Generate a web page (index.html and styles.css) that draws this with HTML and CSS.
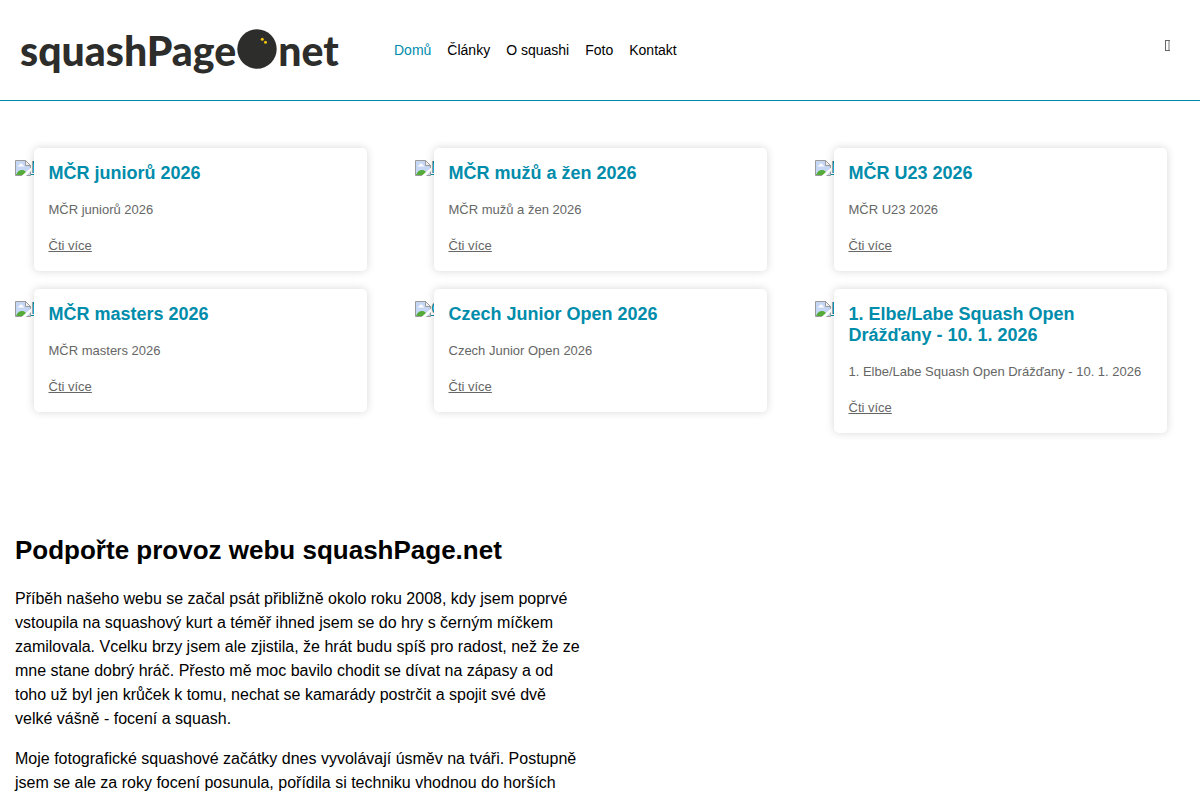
FILE: index.html
```html
<!DOCTYPE html>
<html lang="cs">
<head>
<meta charset="utf-8">
<meta name="viewport" content="width=device-width, initial-scale=1">
<title>squashPage.net</title>
<link rel="stylesheet" href="styles.css">
</head>
<body>
<svg class="sprite" aria-hidden="true">
  <symbol id="missing" viewBox="0 0 16 16">
    <path d="M.5.5h10l5 5v10H.5z" fill="#c6d6f5" stroke="#9b9b9b"/>
    <path d="M3 6.500q0-1.500 1.500-1.500Q5 3 6.500 3.500 8 4 7.500 5 9 5 9 6.500z" fill="#fff"/>
    <path d="M1 15q2-5 6-5t5 5z" fill="#54ab38"/>
    <path d="M10.500.5v5h5z" fill="#f4f4f4" stroke="#9b9b9b"/>
    <path d="M6.500 16 16 7.500V11l-5 5z" fill="#fff"/>
  </symbol>
</svg>
<header class="header">
  <a class="logo" href="#" aria-label="squashPage.net">
    <span>squashPage</span>
    <svg class="ball" viewBox="0 0 40 40" aria-hidden="true">
      <circle cx="20" cy="20" r="19.700" fill="#2d2d2b"/>
      <circle cx="25.300" cy="10.300" r="1.500" fill="#f3c50f"/>
      <circle cx="28.500" cy="13.200" r="1.500" fill="#f3c50f"/>
    </svg>
    <span>net</span>
  </a>
  <nav class="nav">
    <a class="active" href="#">Domů</a>
    <a href="#">Články</a>
    <a href="#">O squashi</a>
    <a href="#">Foto</a>
    <a href="#">Kontakt</a>
  </nav>
  <button class="search" type="button" aria-label="Hledat">
    <svg viewBox="0 0 5 11" aria-hidden="true">
      <path d="M0 0h5v11H0zM1 1v9h2V1z" fill="#666" fill-rule="evenodd"/>
      <path d="M3 1h2v9H3z" fill="#bbb"/>
    </svg>
  </button>
</header>
<main>
  <section class="articles">
    <article class="item">
      <a class="thumb" href="#" aria-label="MČR juniorů 2026"><svg class="missing" aria-hidden="true"><use href="#missing"/></svg>M</a>
      <div class="card"><h3>MČR juniorů 2026</h3><p>MČR juniorů 2026</p><a class="more" href="#">Čti více</a></div>
    </article>
    <article class="item">
      <a class="thumb" href="#" aria-label="MČR mužů a žen 2026"><svg class="missing" aria-hidden="true"><use href="#missing"/></svg>M</a>
      <div class="card"><h3>MČR mužů a žen 2026</h3><p>MČR mužů a žen 2026</p><a class="more" href="#">Čti více</a></div>
    </article>
    <article class="item">
      <a class="thumb" href="#" aria-label="MČR U23 2026"><svg class="missing" aria-hidden="true"><use href="#missing"/></svg>M</a>
      <div class="card"><h3>MČR U23 2026</h3><p>MČR U23 2026</p><a class="more" href="#">Čti více</a></div>
    </article>
    <article class="item">
      <a class="thumb" href="#" aria-label="MČR masters 2026"><svg class="missing" aria-hidden="true"><use href="#missing"/></svg>M</a>
      <div class="card"><h3>MČR masters 2026</h3><p>MČR masters 2026</p><a class="more" href="#">Čti více</a></div>
    </article>
    <article class="item">
      <a class="thumb" href="#" aria-label="Czech Junior Open 2026"><svg class="missing" aria-hidden="true"><use href="#missing"/></svg>C</a>
      <div class="card"><h3>Czech Junior Open 2026</h3><p>Czech Junior Open 2026</p><a class="more" href="#">Čti více</a></div>
    </article>
    <article class="item">
      <a class="thumb" href="#" aria-label="Elbe/Labe Squash Open"><svg class="missing" aria-hidden="true"><use href="#missing"/></svg>E</a>
      <div class="card"><h3>1. Elbe/Labe Squash Open Drážďany - 10. 1. 2026</h3><p>1. Elbe/Labe Squash Open Drážďany - 10. 1. 2026</p><a class="more" href="#">Čti více</a></div>
    </article>
  </section>
  <section class="support">
    <h2>Podpořte provoz webu squashPage.net</h2>
    <p>Příběh našeho webu se začal psát přibližně okolo roku 2008, kdy jsem poprvé vstoupila na squashový kurt a téměř ihned jsem se do hry s černým míčkem zamilovala. Vcelku brzy jsem ale zjistila, že hrát budu spíš pro radost, než že ze mne stane dobrý hráč. Přesto mě moc bavilo chodit se dívat na zápasy a od toho už byl jen krůček k tomu, nechat se kamarády postrčit a spojit své dvě velké vášně - focení a squash.</p>
    <p>Moje fotografické squashové začátky dnes vyvolávají úsměv na tváři. Postupně jsem se ale za roky focení posunula, pořídila si techniku vhodnou do horších</p>
  </section>
</main>
</body>
</html>
```
FILE: styles.css
```css
* { box-sizing: border-box; }
body {
  margin: 0;
  font: 16px/24px "Liberation Sans", Arial, sans-serif;
  color: #000;
  background: #fff;
}
h2, h3, p { margin: 0; }
.sprite { display: none; }

.header {
  display: flex;
  align-items: center;
  padding: 0 30px 0 20px;
  height: 101px;
  border-bottom: 1px solid #008cab;
}
.logo {
  display: flex;
  align-items: flex-start;
  gap: 1px;
  width: 374px;
  font: 900 41px/44px Lato, sans-serif;
  color: #2d2d2b;
  text-decoration: none;
}
.logo span { padding-top: 2px; }
.ball { width: 40px; height: 40px; flex: none; margin-top: 2px; }
.nav { display: flex; gap: 16px; font-size: 14px; }
.nav a { color: #000; text-decoration: none; }
.nav .active { color: #008cab; }
.search {
  margin: 0 0 9px auto;
  padding: 0;
  border: 0;
  background: none;
}
.search svg { display: block; width: 5px; height: 11px; }

.articles {
  display: grid;
  grid-template-columns: repeat(3, 1fr);
  gap: 18px 30px;
  padding: 47px 15px 0;
}
.item { display: grid; align-items: start; min-width: 0; }
.thumb, .card { grid-area: 1 / 1; }
.thumb {
  display: flex;
  width: 5%;
  margin-top: 12px;
  overflow: hidden;
  white-space: nowrap;
  line-height: 16px;
  color: #008cab;
}
.missing { width: 16px; height: 16px; flex: none; }
.card {
  width: 90%;
  margin-left: 5%;
  padding: 15px;
  border-radius: 5px;
  background: #fff;
  box-shadow: 0 0 8px rgba(0, 0, 0, .16);
  font-size: 13px;
  line-height: 20px;
  color: #666;
}
.card h3 { font-size: 18px; line-height: 21px; color: #008cab; }
.card p { margin: 16px 0; }
.more { display: block; width: fit-content; color: #666; }

.support { width: 50%; padding: 102px 15px 0; }
.support h2 { margin-bottom: 21px; font-size: 26px; line-height: 31px; }
.support p + p { margin-top: 16px; }
```
